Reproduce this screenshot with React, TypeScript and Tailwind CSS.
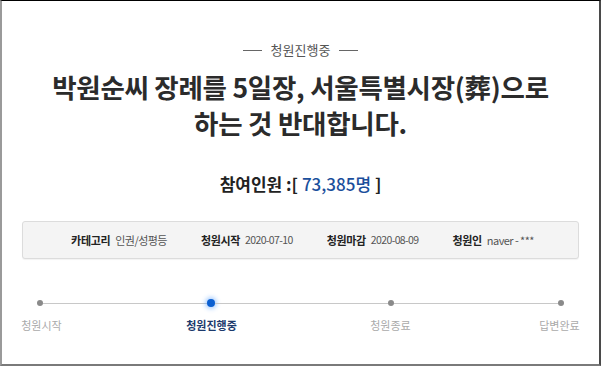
export default function App() {
  const steps = [
    { label: "청원시작", active: false },
    { label: "청원진행중", active: true },
    { label: "청원종료", active: false },
    { label: "답변완료", active: false },
  ];

  return (
    <div
      className="w-[601px] h-[366px] box-border bg-white border-t border-t-black border-l-2 border-l-[#9a9a9a] border-r-2 border-r-[#4a4a4a] border-b-2 border-b-[#7a7a7a] overflow-hidden"
      style={{ fontFamily: '"Noto Sans CJK KR", "Noto Sans", sans-serif' }}
    >
      {/* Status */}
      <div className="pt-[40px] flex items-center justify-center gap-[9px] text-[#555] text-[13px] leading-[18px]">
        <span className="w-[19px] h-px bg-[#666]" />
        <span>청원진행중</span>
        <span className="w-[19px] h-px bg-[#666]" />
      </div>

      {/* Title */}
      <h1 className="mt-[10px] text-center text-[26.5px] leading-[36px] font-bold text-[#2b2b2b] tracking-[-0.01em]">
        박원순씨 장례를 5일장, 서울특별시장(葬)으로
        <br />
        하는 것 반대합니다.
      </h1>

      {/* Count */}
      <div className="mt-[31px] text-center text-[17px] leading-[24px] font-bold text-[#222]">
        참여인원 :[ <span className="text-[#1b4f9c] font-medium">73,385명</span> ]
      </div>

      {/* Info box */}
      <div className="mt-[25px] mx-[20px] h-[38px] rounded-[3px] border border-[#dcdcdc] bg-[#f4f4f4] shadow-[0_1px_1px_rgba(0,0,0,0.05)] flex items-center justify-center gap-[34px] text-[11px] pl-[4px]">
        <div className="flex items-center gap-[5px]">
          <span className="font-bold text-[#222] tracking-[-0.03em]">카테고리</span>
          <span className="text-[#555] tracking-[-0.05em]">인권/성평등</span>
        </div>
        <div className="flex items-center gap-[5px]">
          <span className="font-bold text-[#222] tracking-[-0.03em]">청원시작</span>
          <span className="text-[#555] text-[10.5px] tracking-[-0.06em]">2020-07-10</span>
        </div>
        <div className="flex items-center gap-[5px]">
          <span className="font-bold text-[#222] tracking-[-0.03em]">청원마감</span>
          <span className="text-[#555] text-[10.5px] tracking-[-0.06em]">2020-08-09</span>
        </div>
        <div className="flex items-center gap-[5px]">
          <span className="font-bold text-[#222] tracking-[-0.03em]">청원인</span>
          <span className="text-[#555] tracking-[-0.05em]">naver - ***</span>
        </div>
      </div>

      {/* Progress */}
      <div className="mt-[40px] pl-[35px] flex items-center h-[8px]">
        <span className="w-[6px] h-[6px] rounded-full bg-[#8a8a8a]" />
        <span className="w-[164px] h-px bg-[#c8c8c8]" />
        <span className="w-[8px] h-[8px] rounded-full bg-[#0b5fd1] shadow-[0_0_4px_2px_rgba(70,150,255,0.45)]" />
        <span className="w-[173px] h-px bg-[#c8c8c8]" />
        <span className="w-[6px] h-[6px] rounded-full bg-[#8a8a8a]" />
        <span className="w-[164px] h-px bg-[#c8c8c8]" />
        <span className="w-[6px] h-[6px] rounded-full bg-[#8a8a8a]" />
      </div>
      <div className="mt-[10px] flex text-[11px] leading-[16px]">
        {steps.map((s, i) => (
          <div
            key={s.label}
            className={
              "w-[80px] text-center " +
              (i === 1 ? "ml-[91px] " : i === 2 ? "ml-[100px] " : i === 3 ? "ml-[90px] " : "") +
              (s.active ? "font-bold text-[#1c3a6c]" : "text-[#aaa]")
            }
          >
            {s.label}
          </div>
        ))}
      </div>
    </div>
  );
}
